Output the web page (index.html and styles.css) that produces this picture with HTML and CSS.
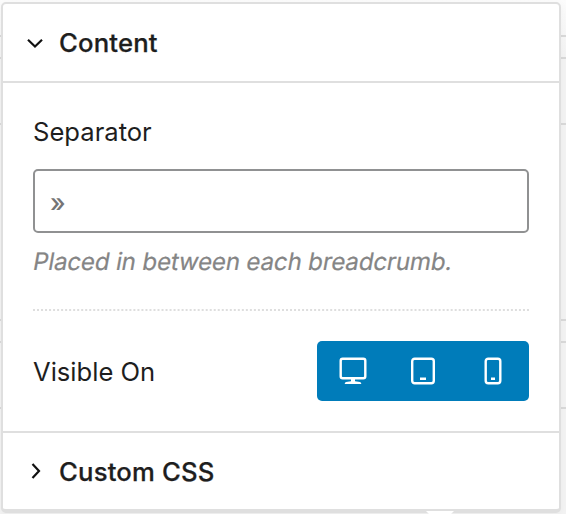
FILE: index.html
```html
<!DOCTYPE html>
<html lang="en">
<head>
<meta charset="utf-8">
<title>Breadcrumb settings</title>
<link rel="stylesheet" href="styles.css">
</head>
<body>
<div class="rules"><i></i><i></i><i></i><i></i><i></i><i></i></div>
<main class="panel">
  <h2 class="section-title">
    <svg class="chevron" viewBox="0 0 18 18"><path d="M2 5.8l7 6.7 7-6.7"/></svg>
    <span>Content</span>
  </h2>
  <section class="section-body">
    <label class="label" for="separator">Separator</label>
    <input class="field" id="separator" type="text" placeholder="»">
    <p class="hint">Placed in between each breadcrumb.</p>
    <svg class="divider" viewBox="0 0 496 2"><path d="M0 1H496"/></svg>
    <div class="row">
      <span class="label visible">Visible On</span>
      <div class="devices">
        <button class="device" aria-label="Desktop"><svg viewBox="0 0 28 28"><rect x="1.7" y="1.7" width="24.6" height="19.6" rx="2"/><path class="solid" d="M12 22h4v2.200l5 .9q1.300.5 1.300 1.900H5.700q0-1.400 1.300-1.900l5-.9z"/></svg></button>
        <button class="device" aria-label="Tablet"><svg viewBox="0 0 28 28"><rect x="3.200" y="1.700" width="21.600" height="24.600" rx="2.500"/><path class="solid" d="M11 20.500h6v2.500h-6z"/></svg></button>
        <button class="device" aria-label="Mobile"><svg viewBox="0 0 28 28"><rect x="6.700" y="1.700" width="14.600" height="24.600" rx="2.500"/><path class="solid" d="M12 20.500h4v2.500h-4z"/></svg></button>
      </div>
    </div>
  </section>
  <h2 class="section-title last">
    <svg class="chevron" viewBox="0 0 18 18"><path d="M6.500 2l6.500 7-6.500 7"/></svg>
    <span>Custom CSS</span>
  </h2>
</main>
<svg class="pointer" viewBox="0 0 30 4"><path d="M1 0h28l-4 4H5z"/></svg>
</body>
</html>
```
FILE: styles.css
```css
* { box-sizing: border-box; }
body {
  margin: 0;
  height: 514px;
  overflow: hidden;
  background: linear-gradient(#fcfcfc, #f3f3f3 60px);
  color: #1e1e1e;
  font-family: Inter, "Liberation Sans", sans-serif;
  font-size: 25.6px;
  padding: 2px 5px 0 1px;
  position: relative;
}
.rules {
  position: absolute;
  inset: 0;
  padding-top: 35px;
}
.rules i { display: block; height: 2px; background: #d9d9d9; margin-bottom: 20px; }
.rules i:nth-child(2) { margin-bottom: 64px; }
.rules i:nth-child(3) { margin-bottom: 194px; }
.rules i:nth-child(5) { margin-bottom: 64px; }
.panel {
  position: relative;
  width: 560px;
  height: 511px;
  background: #fff;
  border: 2px solid #dfdfdf;
  border-bottom-width: 4px;
  border-radius: 5px;
  box-shadow: 0 2px 8px rgba(0, 0, 0, .04);
}
.section-title {
  margin: 0;
  height: 79px;
  padding: 0 23px;
  display: flex;
  align-items: center;
  gap: 15px;
  border-bottom: 2px solid #dfdfdf;
  font-size: 25.7px;
  font-weight: 500;
  letter-spacing: .17px;
  line-height: 32px;
  -webkit-text-stroke: .25px #1e1e1e;
}
.section-title.last { height: 76px; border: 0; }
.last span { padding-top: 2px; }
.chevron { width: 18px; height: 18px; flex: none; }
.chevron path { fill: none; stroke: #111; stroke-width: 2.200; }
.section-body {
  height: 350px;
  padding: 33px 30px 0;
  border-bottom: 2px solid #dfdfdf;
}
.label { display: block; line-height: 32px; white-space: nowrap; }
.visible { padding-top: 2px; }
.field {
  display: block;
  width: 496px;
  height: 64px;
  margin: 21px 0 0;
  padding: 2px 15px 0;
  border: 2px solid #909192;
  border-radius: 5px;
  background: #fff;
  font: inherit;
}
.field::placeholder { color: #757575; opacity: 1; font-weight: 500; }
.hint {
  margin: 13px 0 0 -1px;
  line-height: 32px;
  font-size: 24px;
  color: #858585;
  white-space: nowrap;
  letter-spacing: -.12px;
  transform: skewX(-10deg);
  transform-origin: 0 75%;
  -webkit-text-stroke: .2px #858585;
}
.divider { display: block; width: 496px; height: 2px; margin-top: 31px; }
.divider path { stroke: #dedede; stroke-width: 2; stroke-dasharray: 2 2.016; }
.row { display: flex; align-items: center; justify-content: space-between; margin-top: 30px; }
.devices {
  display: flex;
  width: 212px;
  height: 60px;
  padding: 0 1px;
  border-radius: 5px;
  background: #007cba;
}
.device { flex: 1; display: flex; align-items: center; justify-content: center; padding: 0; border: 0; background: none; }
.device svg { width: 28px; height: 28px; fill: none; stroke: #fff; stroke-width: 2.400; }
.device .solid { fill: #fff; stroke: none; }
.pointer { position: absolute; left: 425px; top: 511px; width: 30px; height: 4px; fill: #fff; }
```
